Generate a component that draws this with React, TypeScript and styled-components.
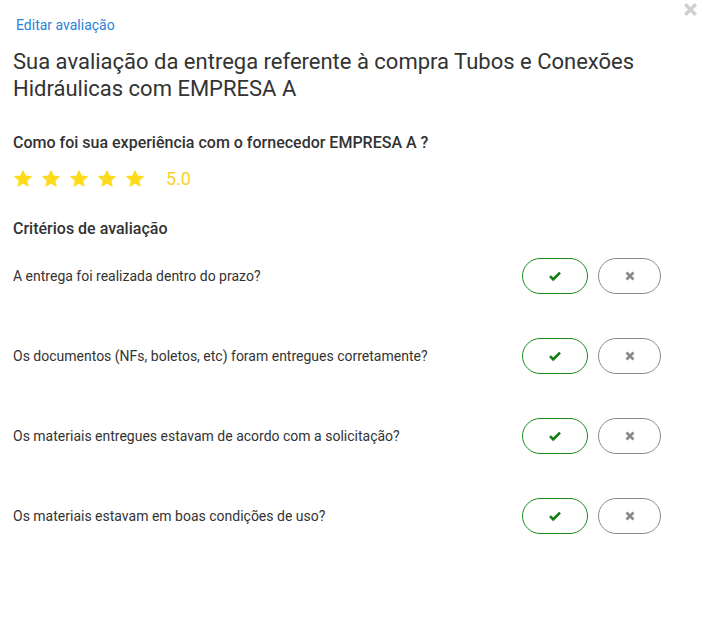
import React from "react";
import styled, { createGlobalStyle } from "styled-components";

const GlobalStyle = createGlobalStyle`
  html, body {
    margin: 0;
    padding: 0;
    background: #fff;
    font-family: Roboto, "Liberation Sans", Arial, sans-serif;
  }
`;

const criterios = [
  "A entrega foi realizada dentro do prazo?",
  "Os documentos (NFs, boletos, etc) foram entregues corretamente?",
  "Os materiais entregues estavam de acordo com a solicitação?",
  "Os materiais estavam em boas condições de uso?",
];

function Star() {
  return (
    <svg width="20" height="19" viewBox="0 0 24 23">
      <path
        d="M12 0.8l3.3 7.2 7.9 0.8-5.9 5.3 1.7 7.8L12 17.9l-6.9 4 1.7-7.8L0.8 8.8l7.9-0.8z"
        fill="#fddb1a"
      />
    </svg>
  );
}

function Check() {
  return (
    <svg width="12" height="10" viewBox="0 0 12 10">
      <path d="M1 5.2l3.2 3.2L11 1.6" stroke="#0d7d10" strokeWidth="2.6" fill="none" />
    </svg>
  );
}

function Cross({ size = 10, color = "#888", weight = 2.6 }: { size?: number; color?: string; weight?: number }) {
  return (
    <svg width={size} height={size} viewBox="0 0 10 10">
      <path d="M1.5 1.5l7 7M8.5 1.5l-7 7" stroke={color} strokeWidth={weight} fill="none" />
    </svg>
  );
}

export default function App() {
  return (
    <>
      <GlobalStyle />
      <Modal>
        <Close>
          <Cross size={15} color="#d0d0d0" weight={2.4} />
        </Close>
        <EditLink>Editar avaliação</EditLink>
        <Title>
          Sua avaliação da entrega referente à compra Tubos e Conexões
          Hidráulicas com EMPRESA A
        </Title>
        <Question>Como foi sua experiência com o fornecedor EMPRESA A ?</Question>
        <Rating>
          <Stars>
            {[0, 1, 2, 3, 4].map((i) => (
              <Star key={i} />
            ))}
          </Stars>
          <Score>5.0</Score>
        </Rating>
        <Section>Critérios de avaliação</Section>
        <List>
          {criterios.map((c) => (
            <Row key={c}>
              <Label>{c}</Label>
              <Buttons>
                <Pill $variant="yes">
                  <Check />
                </Pill>
                <Pill $variant="no">
                  <Cross />
                </Pill>
              </Buttons>
            </Row>
          ))}
        </List>
      </Modal>
    </>
  );
}

const Modal = styled.div`
  position: relative;
  width: 702px;
  height: 627px;
  box-sizing: border-box;
  padding: 16px 41px 0 13px;
  color: #333;
`;

const Close = styled.div`
  position: absolute;
  top: 2px;
  right: 4px;
  display: flex;
`;

const EditLink = styled.a`
  display: block;
  margin-left: 3px;
  font-size: 14px;
  line-height: 18px;
  color: #2a82dc;
  cursor: pointer;
`;

const Title = styled.h1`
  margin: 14px 0 0;
  font-size: 22px;
  font-weight: 400;
  line-height: 27px;
  color: #333;
`;

const Question = styled.h2`
  margin: 31px 0 0;
  font-size: 16px;
  font-weight: 500;
  line-height: 20px;
  color: #333;
`;

const Rating = styled.div`
  display: flex;
  align-items: center;
  margin-top: 13px;
  height: 24px;
`;

const Stars = styled.div`
  display: flex;
  gap: 8px;
`;

const Score = styled.span`
  margin-left: 21px;
  font-size: 18px;
  color: #f6d32d;
`;

const Section = styled.h3`
  margin: 29px 0 0;
  font-size: 16px;
  font-weight: 500;
  line-height: 20px;
  color: #333;
`;

const List = styled.div`
  display: flex;
  flex-direction: column;
  gap: 44px;
  margin-top: 19px;
`;

const Row = styled.div`
  display: flex;
  align-items: center;
  justify-content: space-between;
  height: 36px;
`;

const Label = styled.span`
  font-size: 14px;
  color: #333;
`;

const Buttons = styled.div`
  display: flex;
  gap: 10px;
`;

const Pill = styled.button<{ $variant: "yes" | "no" }>`
  display: flex;
  align-items: center;
  justify-content: center;
  width: ${(p) => (p.$variant === "yes" ? "66px" : "63px")};
  height: 36px;
  border-radius: 18px;
  background: #fff;
  border: 1px solid ${(p) => (p.$variant === "yes" ? "#1d8a1d" : "#8a8a8a")};
  padding: 0;
  cursor: pointer;
`;
